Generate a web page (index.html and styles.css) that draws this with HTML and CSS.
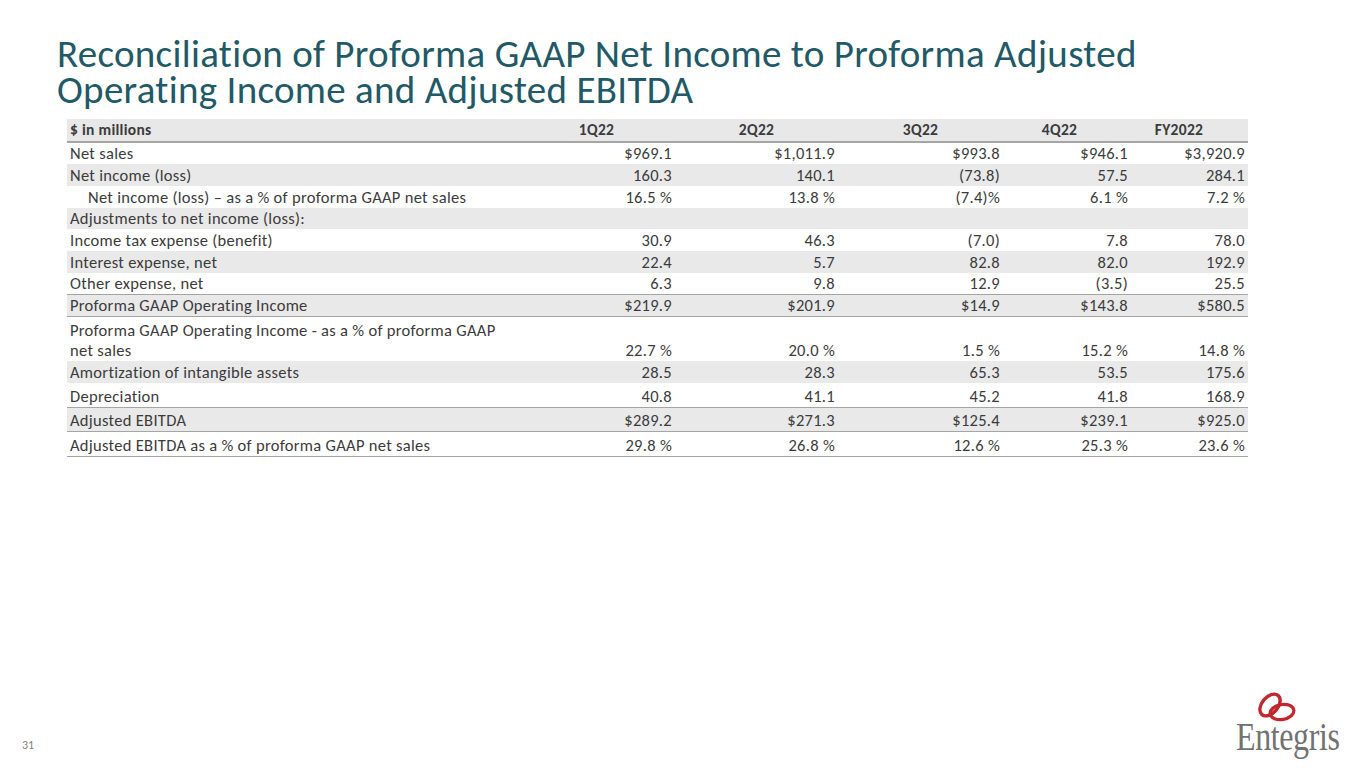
FILE: index.html
```html
<!DOCTYPE html>
<html lang="en">
<head>
<meta charset="utf-8">
<title>Reconciliation</title>
<link rel="stylesheet" href="styles.css">
</head>
<body>
<div class="slide">
  <h1 class="title">Reconciliation of Proforma GAAP Net Income to Proforma Adjusted<br>Operating Income and Adjusted EBITDA</h1>
  <table class="recon">
    <colgroup>
      <col class="c-label"><col class="c1"><col class="c2"><col class="c3"><col class="c4"><col class="c5">
    </colgroup>
    <thead>
      <tr class="hdr">
        <th class="lbl">$ in millions</th><th class="h1">1Q22</th><th class="h2">2Q22</th><th class="h3">3Q22</th><th class="h4">4Q22</th><th class="h5">FY2022</th>
      </tr>
    </thead>
    <tbody>
      <tr class="r"><td class="lbl">Net sales</td><td>$969.1</td><td>$1,011.9</td><td>$993.8</td><td>$946.1</td><td>$3,920.9</td></tr>
      <tr class="r g"><td class="lbl">Net income (loss)</td><td>160.3</td><td>140.1</td><td>(73.8)</td><td>57.5</td><td>284.1</td></tr>
      <tr class="r"><td class="lbl ind">Net income (loss) – as a % of proforma GAAP net sales</td><td>16.5 %</td><td>13.8 %</td><td>(7.4)%</td><td>6.1 %</td><td>7.2 %</td></tr>
      <tr class="r g"><td class="lbl">Adjustments to net income (loss):</td><td></td><td></td><td></td><td></td><td></td></tr>
      <tr class="r"><td class="lbl">Income tax expense (benefit)</td><td>30.9</td><td>46.3</td><td>(7.0)</td><td>7.8</td><td>78.0</td></tr>
      <tr class="r g"><td class="lbl">Interest expense, net</td><td>22.4</td><td>5.7</td><td>82.8</td><td>82.0</td><td>192.9</td></tr>
      <tr class="r b"><td class="lbl">Other expense, net</td><td>6.3</td><td>9.8</td><td>12.9</td><td>(3.5)</td><td>25.5</td></tr>
      <tr class="r g b"><td class="lbl">Proforma GAAP Operating Income</td><td>$219.9</td><td>$201.9</td><td>$14.9</td><td>$143.8</td><td>$580.5</td></tr>
      <tr class="r tall"><td class="lbl">Proforma GAAP Operating Income - as a % of proforma GAAP<br>net sales</td><td>22.7 %</td><td>20.0 %</td><td>1.5 %</td><td>15.2 %</td><td>14.8 %</td></tr>
      <tr class="r g"><td class="lbl">Amortization of intangible assets</td><td>28.5</td><td>28.3</td><td>65.3</td><td>53.5</td><td>175.6</td></tr>
      <tr class="r b r24"><td class="lbl">Depreciation</td><td>40.8</td><td>41.1</td><td>45.2</td><td>41.8</td><td>168.9</td></tr>
      <tr class="r g b r24"><td class="lbl">Adjusted EBITDA</td><td>$289.2</td><td>$271.3</td><td>$125.4</td><td>$239.1</td><td>$925.0</td></tr>
      <tr class="r b r24"><td class="lbl">Adjusted EBITDA as a % of proforma GAAP net sales</td><td>29.8 %</td><td>26.8 %</td><td>12.6 %</td><td>25.3 %</td><td>23.6 %</td></tr>
    </tbody>
  </table>
  <span class="pageno">31</span>
  <div class="logo">
    <svg class="rings" width="44" height="34" viewBox="0 0 44 34" aria-hidden="true">
      <ellipse cx="15" cy="14" rx="8" ry="12.5" transform="rotate(40 15 14)" fill="none" stroke="#c1272d" stroke-width="3.4"/>
      <ellipse cx="27" cy="21" rx="12" ry="7.5" transform="rotate(-10 27 21)" fill="none" stroke="#c1272d" stroke-width="3.2"/>
    </svg>
    <span class="wordmark">Entegris</span>
  </div>
</div>
</body>
</html>
```

FILE: styles.css
```css
html, body {
  margin: 0;
  padding: 0;
  background: #ffffff;
}

.slide {
  width: 1365px;
  height: 768px;
  position: relative;
  overflow: hidden;
  font-family: "Carlito", "Lato", "Liberation Sans", sans-serif;
  font-variant-ligatures: none;
  color: #3b3b3b;
}

.title {
  margin: 0;
  padding: 36px 0 0 57px;
  font-weight: normal;
  font-size: 39px;
  line-height: 36px;
  color: #215967;
  letter-spacing: 0.3px;
}

.recon {
  margin: 11px 0 0 67px;
  width: 1181px;
  border-collapse: collapse;
  table-layout: fixed;
  font-size: 16.5px;
  letter-spacing: 0.3px;
}

.c-label { width: 451px; }
.c1 { width: 157px; }
.c2 { width: 163px; }
.c3 { width: 165px; }
.c4 { width: 128px; }
.c5 { width: 117px; }

.recon th, .recon td {
  padding: 0 3px 1px 3px;
  vertical-align: bottom;
  text-align: right;
  white-space: nowrap;
  line-height: 20px;
}

.recon .lbl {
  text-align: left;
}

.recon .ind {
  padding-left: 21px;
}

.hdr {
  height: 23px;
  background: #e8e8e8;
  border-bottom: 2px solid #a5a5a5;
}

.hdr th {
  font-weight: bold;
  text-align: center;
  font-size: 15.5px;
}

.hdr th.lbl { text-align: left; }
.hdr th.h4 { padding-right: 18px; }
.hdr th.h5 { padding-right: 24px; }

.r { height: 21.8px; }
.r.g { background: #e9e9e9; }
.r.b { border-bottom: 1.5px solid #a5a5a5; }
.r.tall { height: 44px; }
.r.r24 { height: 24.6px; }

.pageno {
  position: absolute;
  left: 22px;
  bottom: 16px;
  font-size: 12px;
  color: #7f7f7f;
}

.logo {
  position: absolute;
  right: 23px;
  bottom: 15px;
  width: 106px;
  display: flex;
  flex-direction: column;
  align-items: flex-start;
}

.rings {
  display: block;
  margin-left: 19px;
  margin-bottom: -4px;
}

.wordmark {
  display: block;
  font-family: "Liberation Serif", "Times New Roman", serif;
  font-size: 40px;
  line-height: 32px;
  color: #727272;
  letter-spacing: -0.5px;
  white-space: nowrap;
  transform: scaleX(0.8);
  transform-origin: left center;
}
```
